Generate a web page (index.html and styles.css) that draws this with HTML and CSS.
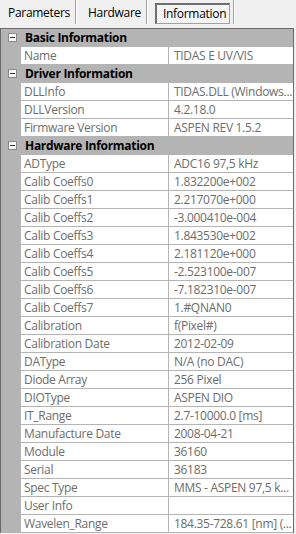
FILE: index.html
```html
<!DOCTYPE html>
<html lang="en">
<head>
    <meta charset="UTF-8">
    <meta name="viewport" content="width=device-width, initial-scale=1.0">
    <title>Information</title>
    <link rel="stylesheet" href="styles.css">
</head>
<body>
    <div class="tabs">
        <div class="tab">Parameters</div>
        <div class="tab">Hardware</div>
        <div class="tab active"><span class="tab-box">Information</span></div>
    </div>

    <div class="grid">
        <div class="cat"><span class="toggle"></span>Basic Information</div>
        <div class="row"><div class="label">Name</div><div class="value">TIDAS E UV/VIS</div></div>

        <div class="cat"><span class="toggle"></span>Driver Information</div>
        <div class="row"><div class="label">DLLInfo</div><div class="value">TIDAS.DLL (Windows...</div></div>
        <div class="row"><div class="label">DLLVersion</div><div class="value">4.2.18.0</div></div>
        <div class="row"><div class="label">Firmware Version</div><div class="value">ASPEN REV 1.5.2</div></div>

        <div class="cat"><span class="toggle"></span>Hardware Information</div>
        <div class="row"><div class="label">ADType</div><div class="value">ADC16 97,5 kHz</div></div>
        <div class="row"><div class="label">Calib Coeffs0</div><div class="value">1.832200e+002</div></div>
        <div class="row"><div class="label">Calib Coeffs1</div><div class="value">2.217070e+000</div></div>
        <div class="row"><div class="label">Calib Coeffs2</div><div class="value">-3.000410e-004</div></div>
        <div class="row"><div class="label">Calib Coeffs3</div><div class="value">1.843530e+002</div></div>
        <div class="row"><div class="label">Calib Coeffs4</div><div class="value">2.181120e+000</div></div>
        <div class="row"><div class="label">Calib Coeffs5</div><div class="value">-2.523100e-007</div></div>
        <div class="row"><div class="label">Calib Coeffs6</div><div class="value">-7.182310e-007</div></div>
        <div class="row"><div class="label">Calib Coeffs7</div><div class="value">1.#QNAN0</div></div>
        <div class="row"><div class="label">Calibration</div><div class="value">f(Pixel#)</div></div>
        <div class="row"><div class="label">Calibration Date</div><div class="value">2012-02-09</div></div>
        <div class="row"><div class="label">DAType</div><div class="value">N/A (no DAC)</div></div>
        <div class="row"><div class="label">Diode Array</div><div class="value">256 Pixel</div></div>
        <div class="row"><div class="label">DIOType</div><div class="value">ASPEN DIO</div></div>
        <div class="row"><div class="label">IT_Range</div><div class="value">2.7-10000.0 [ms]</div></div>
        <div class="row"><div class="label">Manufacture Date</div><div class="value">2008-04-21</div></div>
        <div class="row"><div class="label">Module</div><div class="value">36160</div></div>
        <div class="row"><div class="label">Serial</div><div class="value">36183</div></div>
        <div class="row"><div class="label">Spec Type</div><div class="value">MMS - ASPEN 97,5 k...</div></div>
        <div class="row"><div class="label">User Info</div><div class="value"></div></div>
        <div class="row"><div class="label">Wavelen_Range</div><div class="value">184.35-728.61 [nm] (...</div></div>
    </div>
</body>
</html>
```

FILE: styles.css
```css
/* Property grid */
body {
    margin: 0;
    padding: 0;
    background-color: #f0f0f0;
    font-family: 'Open Sans', 'Noto Sans', sans-serif;
    font-size: 12px;
    letter-spacing: -0.3px;
    color: #000;
    overflow: hidden;
}

.tabs {
    display: flex;
    height: 28px;
}

.tab {
    display: flex;
    align-items: center;
    height: 24px;
    padding: 0 9px 0 8px;
    border-right: 1px solid #a0a0a0;
    box-shadow: 1px 0 0 #fff;
}

.tab:nth-child(1) {
    width: 76px;
    box-sizing: border-box;
}

.tab:nth-child(2) {
    width: 71px;
    box-sizing: border-box;
    padding-left: 12px;
}

.tab.active {
    width: 87px;
    box-sizing: border-box;
    padding: 0 0 0 8px;
}

.tab-box {
    display: flex;
    align-items: center;
    height: 21px;
    margin-top: 2px;
    padding: 0 4px 0 6px;
    border-top: 2px solid #6e6e6e;
    border-left: 2px solid #6e6e6e;
    border-right: 1px solid #a0a0a0;
    border-bottom: 1px solid #a0a0a0;
    box-sizing: border-box;
    width: 75px;
    background: repeating-conic-gradient(#ffffff 0 25%, #ececec 0 50%) 0 0 / 2px 2px;
}

.grid {
    width: 294px;
    box-sizing: border-box;
    border-top: 1px solid #6a6a6a;
    border-left: 1px solid #6a6a6a;
    border-right: 1px solid #6a6a6a;
}

.cat {
    display: flex;
    align-items: center;
    height: 17px;
    border-bottom: 1px solid #b4b4b4;
    background-color: #b4b4b4;
    font-weight: 700;
    white-space: nowrap;
}

.toggle {
    display: flex;
    align-items: center;
    justify-content: center;
    width: 9px;
    height: 9px;
    box-sizing: border-box;
    margin: 0 8px 0 7px;
    border: 1px solid #8a8a8a;
    background-color: #fafafa;
}

.toggle::after {
    content: "";
    width: 5px;
    height: 1px;
    background-color: #333;
}

.row {
    display: flex;
    height: 17px;
    border-bottom: 1px solid #b4b4b4;
    background-color: #b4b4b4;
    color: #6d6d6d;
    line-height: 17px;
    white-space: nowrap;
}

.label {
    width: 148px;
    box-sizing: border-box;
    margin-left: 20px;
    padding-left: 3px;
    border-right: 1px solid #b4b4b4;
    background-color: #fff;
    overflow: hidden;
}

.value {
    flex: 1;
    padding-left: 5px;
    background-color: #fff;
    overflow: hidden;
}
```
